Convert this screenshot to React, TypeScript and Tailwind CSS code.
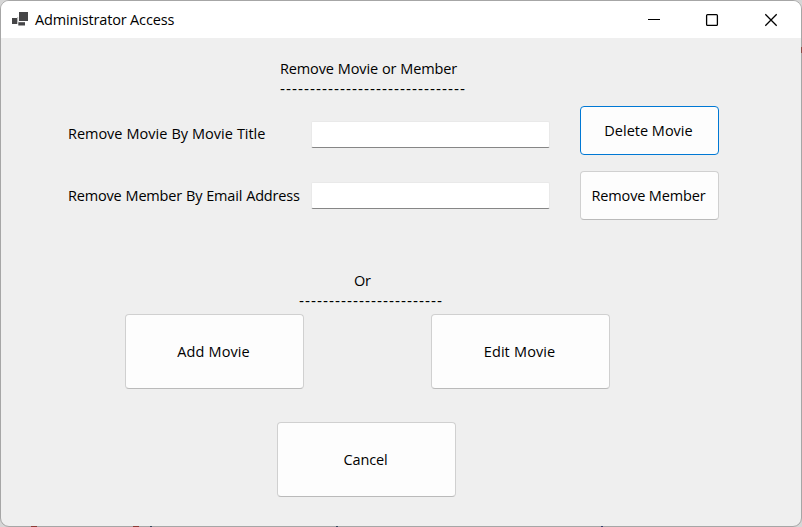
import type { ReactNode } from 'react';

const FONT = "font-['Open_Sans','Noto_Sans',sans-serif]";

function Label({ children, className = '' }: { children: ReactNode; className?: string }) {
  return <span className={`block whitespace-pre leading-5 ${className}`}>{children}</span>;
}

function Divider({ count }: { count: number }) {
  return (
    <Label className="font-['Liberation_Sans',sans-serif] text-[15px] tracking-[1.005px]">{'-'.repeat(count)}</Label>
  );
}

function Button({ children, className = '' }: { children: ReactNode; className?: string }) {
  return (
    <button
      type="button"
      className={`flex shrink-0 items-center justify-center whitespace-pre rounded-[4px] border bg-[#fdfdfd] pr-[2px] leading-5 ${className}`}
    >
      {children}
    </button>
  );
}

function TextField({ label }: { label: string }) {
  return (
    <input
      aria-label={label}
      className="block h-[27px] w-[239px] rounded-[2px] border border-[#e9e9e9] border-b-[#868686] bg-white px-1 outline-none"
    />
  );
}

function TitleBar() {
  return (
    <header className="flex h-[37px] shrink-0 items-center bg-white">
      <svg className="ml-[11px] shrink-0" width="17" height="15" viewBox="0 0 17 15" fill="#454547">
        <rect x="7" y="0" width="9" height="9" />
        <rect x="0" y="6" width="5.3" height="6" />
        <rect x="6.3" y="10.2" width="6.7" height="3.3" />
        <rect x="5.2" y="5" width="1" height="5" fill="#bbb" />
      </svg>
      <Label className="ml-1.5 tracking-[-0.16px]">Administrator Access</Label>
      <svg className="ml-auto shrink-0" width="154" height="36" viewBox="0 0 154 36" fill="none" stroke="#000" strokeWidth="1.3">
        <path d="M1 17.5H13" strokeWidth="1" />
        <rect x="59.6" y="12.6" width="10.8" height="10.8" rx="1" />
        <path d="M118.3 12.3L129.7 23.7M129.7 12.3L118.3 23.7" />
      </svg>
    </header>
  );
}

export default function App() {
  return (
    <div className={`relative h-[527px] w-[802px] overflow-hidden bg-[#d6d6d6] text-[14.5px] text-black ${FONT}`}>
      <div className="flex h-full flex-col overflow-hidden rounded-[9px] border border-[#a6a6a6] bg-[#efefef]">
        <TitleBar />
        <main className="flex flex-col">
          <div className="ml-[279px] mt-[21px]">
            <Label className="tracking-[-0.14px] [word-spacing:0.4px]">Remove Movie or Member</Label>
            <Divider count={31} />
          </div>
          <section className="ml-[67px] mt-[7px] flex h-[114px]">
            <div className="flex w-[243px] flex-col gap-[42px] pt-[18px]">
              <Label className="tracking-[-0.03px] [word-spacing:0.4px]">Remove Movie By Movie Title</Label>
              <Label className="tracking-[-0.18px] [word-spacing:0.4px]">Remove Member By Email Address</Label>
            </div>
            <div className="flex w-[269px] flex-col gap-[34px] pt-[15px]">
              <TextField label="Movie title" />
              <TextField label="Member email address" />
            </div>
            <div className="flex flex-col gap-4">
              <Button className="h-[49px] w-[139px] border-[#0078d4]">Delete Movie</Button>
              <Button className="h-[49px] w-[139px] border-[#d0d0d0] border-b-[#bababa] tracking-[-0.15px]">Remove Member</Button>
            </div>
          </section>
          <div className="ml-[298px] mt-[51px]">
            <Label className="ml-[55px] tracking-[-0.3px]">Or</Label>
            <Divider count={24} />
          </div>
          <div className="ml-[124px] mt-[3px] flex gap-[127px]">
            <Button className="h-[75px] w-[179px] border-[#d0d0d0] border-b-[#bababa] tracking-[0.08px] [word-spacing:0.4px]">Add Movie</Button>
            <Button className="h-[75px] w-[179px] border-[#d0d0d0] border-b-[#bababa] tracking-[0.06px] [word-spacing:0.4px]">Edit Movie</Button>
          </div>
          <Button className="ml-[276px] mt-[33px] h-[75px] w-[179px] border-[#d0d0d0] border-b-[#bababa] tracking-[-0.15px]">Cancel</Button>
        </main>
      </div>
      <i className="absolute left-[31px] top-[526px] h-px w-[6px] bg-[#8c3b36]" />
      <i className="absolute left-[133px] top-[526px] h-px w-[6px] bg-[#8c3b36]" />
      <i className="absolute left-[150px] top-[526px] h-px w-[2px] bg-[#34485e]" />
      <i className="absolute left-[336px] top-[526px] h-px w-[2px] bg-[#34485e]" />
      <i className="absolute left-[601px] top-[526px] h-px w-[2px] bg-[#34406e]" />
      <i className="absolute left-[801px] top-[47px] h-[6px] w-px bg-[#8c4a46]" />
    </div>
  );
}
